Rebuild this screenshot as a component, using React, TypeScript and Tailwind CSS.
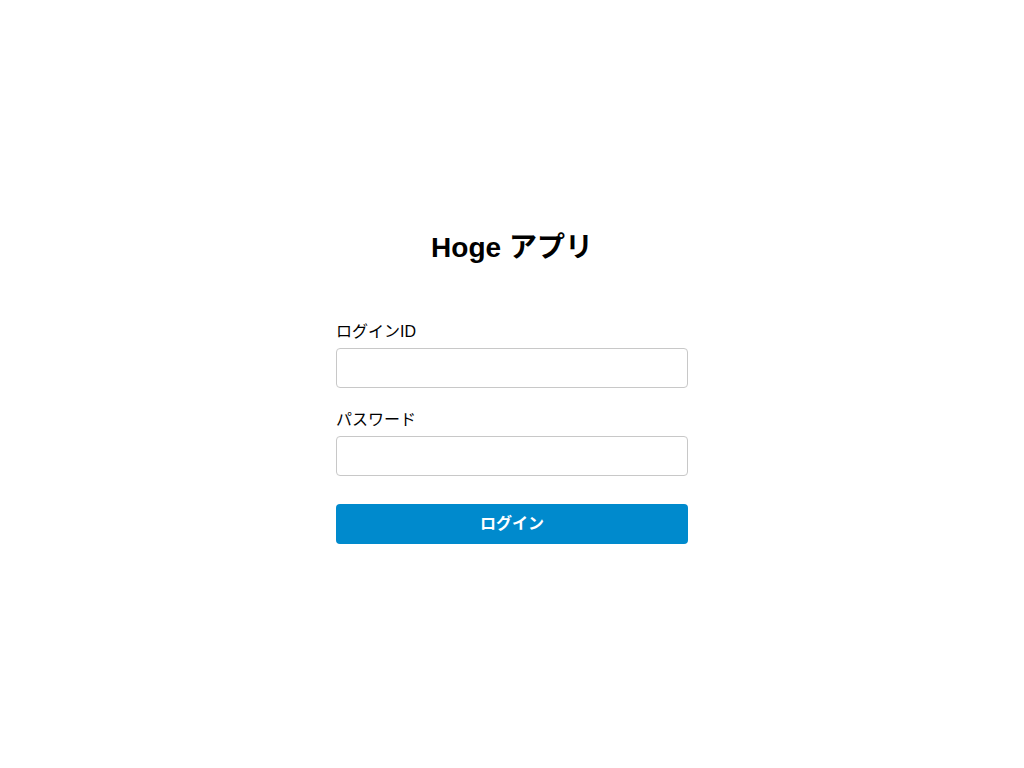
export default function App() {
  return (
    <div
      className="min-h-screen w-full bg-white flex justify-center pt-[232px] text-black"
      style={{ fontFamily: '"Liberation Sans", "Noto Sans CJK JP", sans-serif' }}
    >
      <div className="w-[352px] flex flex-col">
        <h1 className="text-center text-[28px] leading-8 font-bold">Hoge アプリ</h1>
        <form className="mt-[56px] flex flex-col" onSubmit={(e) => e.preventDefault()}>
          <label className="text-base leading-6" htmlFor="login-id">
            ログインID
          </label>
          <input
            id="login-id"
            type="text"
            className="mt-1 h-10 w-full rounded border border-[#c8c8c8] px-3 outline-none"
          />
          <label className="mt-5 text-base leading-6" htmlFor="password">
            パスワード
          </label>
          <input
            id="password"
            type="password"
            className="mt-1 h-10 w-full rounded border border-[#c8c8c8] px-3 outline-none"
          />
          <button
            type="submit"
            className="mt-7 h-10 w-full rounded bg-[#008acd] text-base font-bold text-white"
          >
            ログイン
          </button>
        </form>
      </div>
    </div>
  );
}
